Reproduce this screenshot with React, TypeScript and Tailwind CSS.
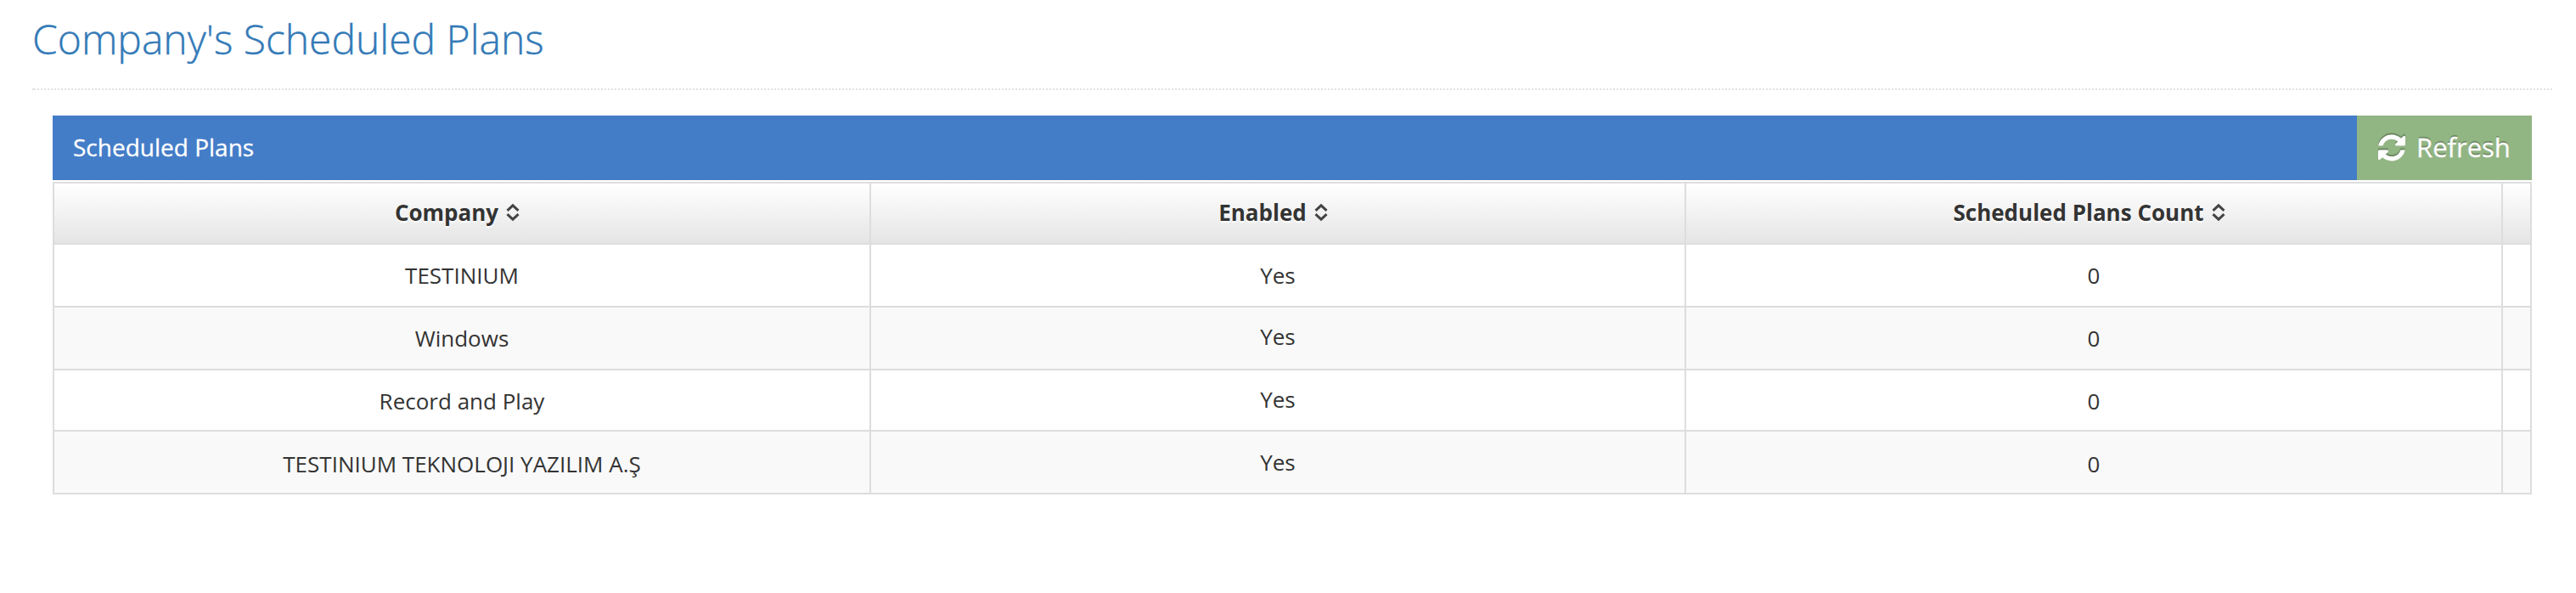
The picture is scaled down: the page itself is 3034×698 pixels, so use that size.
import React from "react";

type Row = { company: string; enabled: string; count: number; cell: string; outer: string; mid: string };

const rows: Row[] = [
  { company: "TESTINIUM", enabled: "Yes", count: 0, cell: "h-[74px] bg-white", outer: "pt-0", mid: "pb-0" },
  { company: "Windows", enabled: "Yes", count: 0, cell: "h-[74px] bg-[#f9f9f9]", outer: "pt-0", mid: "pb-[4px]" },
  { company: "Record and Play", enabled: "Yes", count: 0, cell: "h-[72px] bg-white", outer: "pt-[2px]", mid: "pb-[2px]" },
  { company: "TESTINIUM TEKNOLOJI YAZILIM A.Ş", enabled: "Yes", count: 0, cell: "h-[74px] bg-[#f9f9f9]", outer: "pt-[4px]", mid: "pb-0" },
];

const columns = ["Company", "Enabled", "Scheduled Plans Count"];

function SortIcon() {
  return (
    <svg className="ml-[9px] h-[22px] w-[16px]" viewBox="0 0 16 22" fill="none" stroke="#444" strokeWidth="3">
      <path d="M1.5 8.8 8 2.8l6.5 6" />
      <path d="M1.5 13.2 8 19.2l6.5-6" />
    </svg>
  );
}

function RefreshIcon() {
  return (
    <svg className="h-[36px] w-[32px] drop-shadow-[0_-2px_0_rgba(0,0,0,0.25)]" viewBox="0 0 1536 1792" preserveAspectRatio="none" fill="#fff">
      <path d="M1511 1056q0 5-1 7-64 268-268 434.500T764 1664q-146 0-282.500-55T238 1452l-129 129q-19 19-45 19t-45-19-19-45v-448q0-26 19-45t45-19h448q26 0 45 19t19 45-19 45l-137 137q71 66 161 102t187 36q134 0 250-65t186-179q11-17 53-117 8-23 30-23h192q13 0 22.500 9.500t9.500 22.500zm25-800v448q0 26-19 45t-45 19h-448q-26 0-45-19t-19-45 19-45l138-138Q969 384 768 384q-134 0-250 65T332 628q-11 17-53 117-8 23-30 23H50q-13 0-22.500-9.500T18 736v-7q65-268 270-434.500T768 128q146 0 284 55.500T1297 340l130-129q19-19 45-19t45 19 19 45z" />
    </svg>
  );
}

export default function App() {
  return (
    <main className="min-h-[698px] w-full bg-white pl-[38px] pr-[28px] font-['Open_Sans',sans-serif] text-[#333]">
      <h1 className="h-[104px] pt-[13px] text-[48px] font-light leading-[65px] text-[#337ab7] [-webkit-text-stroke:0.4px_#337ab7]">
        Company's Scheduled Plans
      </h1>
      <div className="h-[2px] border-l-2 border-[#e2e2e2] bg-[repeating-linear-gradient(to_right,#e2e2e2_0_2px,transparent_2px_4px)]" />
      <section className="ml-[24px] mr-[24px] mt-[30px]">
        <header className="flex h-[76px] items-stretch justify-between bg-[#447dc7]">
          <h2 className="pl-[24px] text-[28px] leading-[74px] text-white [-webkit-text-stroke:0.3px_#fff]">Scheduled Plans</h2>
          <button className="flex w-[206px] items-center bg-[#92b584] pl-[25px] text-[31px] text-white [text-shadow:0_-2px_0_rgba(0,0,0,0.25)] [-webkit-text-stroke:0.3px_#fff]">
            <RefreshIcon />
            <span className="ml-[13px] pb-[2px] leading-[74px]">Refresh</span>
          </button>
        </header>
        <div className="mt-[2px] grid grid-cols-[962px_960px_962px_34px] border-l-2 border-t-2 border-[#ddd] text-[26px]">
          {columns.map((label) => (
            <div key={label} className="flex h-[72px] items-center justify-center border-b-2 border-r-2 border-[#ddd] bg-linear-to-b from-white to-[#e5e5e5] pb-[2px] pr-[11px] font-bold [text-shadow:0_2px_2px_#fff]">
              {label}
              <SortIcon />
            </div>
          ))}
          <div className="h-[72px] border-b-2 border-r-2 border-[#ddd] bg-linear-to-b from-white to-[#e5e5e5]" />
          {rows.map((row) => (
            <React.Fragment key={row.company}>
              <div className={`flex items-center justify-center border-b-2 border-r-2 border-[#ddd] ${row.cell} ${row.outer}`}>{row.company}</div>
              <div className={`flex items-center justify-center border-b-2 border-r-2 border-[#ddd] ${row.cell} ${row.mid}`}>{row.enabled}</div>
              <div className={`flex items-center justify-center border-b-2 border-r-2 border-[#ddd] ${row.cell} ${row.outer}`}>{row.count}</div>
              <div className={`border-b-2 border-r-2 border-[#ddd] ${row.cell}`} />
            </React.Fragment>
          ))}
        </div>
      </section>
    </main>
  );
}
